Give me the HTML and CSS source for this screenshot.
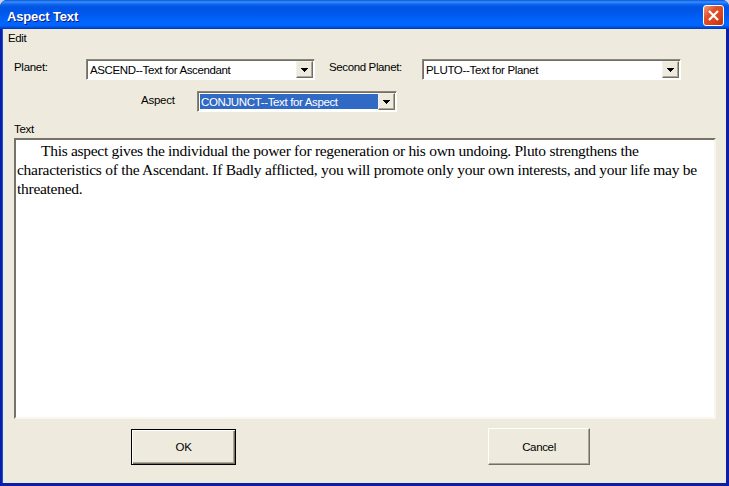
FILE: index.html
```html
<!DOCTYPE html>
<html lang="en">
<head>
<meta charset="utf-8">
<title>Aspect Text</title>
<link rel="stylesheet" href="styles.css">
</head>
<body>
<div class="window">
  <header class="titlebar">
    <h1 class="title">Aspect Text</h1>
    <button class="close" aria-label="Close">
      <svg width="21" height="21" viewBox="0 0 21 21"><path d="M6 6l9 9M15 6l-9 9" stroke="#fff" stroke-width="2.2" fill="none"/></svg>
    </button>
  </header>
  <main class="client">
    <nav class="menu"><span class="t-edit">Edit</span></nav>
    <div class="row row-planets">
      <label class="label label-planet">Planet:</label>
      <div class="combo combo-first"><span class="value"><span class="t-ascend">ASCEND--Text for Ascendant</span></span><span class="drop"><svg width="7" height="4" viewBox="0 0 7 4" shape-rendering="crispEdges"><path d="M0 0h7v1H6v1H5v1H4v1H3V3H2V2H1V1H0z"/></svg></span></div>
      <label class="label label-second">Second Planet:</label>
      <div class="combo combo-second"><span class="value"><span class="t-pluto">PLUTO--Text for Planet</span></span><span class="drop"><svg width="7" height="4" viewBox="0 0 7 4" shape-rendering="crispEdges"><path d="M0 0h7v1H6v1H5v1H4v1H3V3H2V2H1V1H0z"/></svg></span></div>
    </div>
    <div class="row row-aspect">
      <label class="label label-aspect">Aspect</label>
      <div class="combo combo-aspect"><span class="value selected"><span class="t-conjunct">CONJUNCT--Text for Aspect</span></span><span class="drop"><svg width="7" height="4" viewBox="0 0 7 4" shape-rendering="crispEdges"><path d="M0 0h7v1H6v1H5v1H4v1H3V3H2V2H1V1H0z"/></svg></span></div>
    </div>
    <div class="caption">Text</div>
    <div class="memo">
      <div class="line line-1">This aspect gives the individual the power for regeneration or his own undoing. Pluto strengthens the</div>
      <div class="line line-2">characteristics of the Ascendant. If Badly afflicted, you will promote only your own interests, and your life may be</div>
      <div class="line line-3">threatened.</div>
    </div>
    <div class="actions">
      <button class="btn btn-default">OK</button>
      <button class="btn btn-cancel">Cancel</button>
    </div>
  </main>
</div>
</body>
</html>
```
FILE: styles.css
```css
* { box-sizing: border-box; }
body {
  margin: 0;
  background: #c9d6ee;
  font: 11.5px/14px "Liberation Sans", Arial, sans-serif;
  color: #000;
}
.window {
  width: 729px;
  height: 486px;
  overflow: hidden;
  border-radius: 7px 7px 0 0;
  background: #0a1ea8;
}
.titlebar {
  height: 29px;
  display: flex;
  align-items: flex-start;
  justify-content: space-between;
  padding: 5px 5px 0 7px;
  background: linear-gradient(#0a55d8 0, #3a90ff 2px, #1068f0 4px, #0054e3 7px, #0058ee 14px, #0066ff 22px, #0062fa 26px, #0043c8 28px, #0038b0 29px);
}
.title {
  margin: 4px 0 0;
  font: bold 13px/16px "Liberation Sans", Arial, sans-serif;
  letter-spacing: -0.15px;
  color: #fff;
  text-shadow: 1px 1px 0 #0a1883;
  white-space: nowrap;
}
.close {
  width: 21px;
  height: 21px;
  padding: 0;
  border: 1px solid #fff;
  border-radius: 3px;
  background: linear-gradient(135deg, #f0a084 0, #e0512a 35%, #d8431c 70%, #b83210 100%);
}
.close svg { display: block; margin: -1px; }
.client {
  height: 454px;
  margin: 0 3px;
  background: #eeebde;
  box-shadow: -1px 0 #1a50e0;
}
.menu { height: 30px; padding: 2px 0 0 5px; }
.row { display: flex; align-items: flex-start; }
.row-planets { height: 32px; padding-left: 11px; }
.row-aspect { height: 31px; padding-left: 138px; }
.label { white-space: nowrap; flex: none; }
.label-planet { width: 72px; padding-top: 1px; letter-spacing: -0.3px; }
.label-second { width: 93px; padding-top: 1px; letter-spacing: -0.37px; }
.label-aspect { width: 56px; padding-top: 2px; letter-spacing: -0.25px; }
.combo {
  flex: none;
  height: 21px;
  display: flex;
  padding: 1px;
  border: 1px solid;
  border-color: #8a867b #fff #fff #8a867b;
  background: #fff;
  box-shadow: inset 1px 1px #716f64;
}
.combo-first { width: 229px; margin-right: 14px; }
.combo-second { width: 259px; }
.combo-aspect { width: 200px; }
.value {
  flex: 1;
  margin: 1px 0 1px 1px;
  padding: 1px 0 0 1px;
  line-height: 14px;
  white-space: nowrap;
}
.selected { background: #316ac5; color: #fff; }
.drop {
  width: 17px;
  height: 17px;
  display: flex;
  align-items: center;
  justify-content: center;
  background: #eeebde;
  border: 1px solid;
  border-color: #f4f2e8 #716f64 #716f64 #f4f2e8;
  box-shadow: inset -1px -1px #aca899;
}
.t-edit { letter-spacing: -0.4px; }
.t-ascend { letter-spacing: -0.38px; }
.t-pluto { letter-spacing: -0.33px; }
.t-conjunct { letter-spacing: -0.36px; }
.caption { height: 16px; padding-left: 11px; letter-spacing: -0.3px; }
.memo {
  width: 702px;
  height: 281px;
  margin-left: 11px;
  padding: 1px 0 0 1px;
  border: 2px solid;
  border-color: #777269 #f8f6ee #f8f6ee #777269;
  background: #fff;
  font: 15.5px/19px "Liberation Serif", "Times New Roman", serif;
}
.line { white-space: nowrap; }
.line-1 { padding-left: 24px; letter-spacing: -0.29px; }
.line-2 { letter-spacing: -0.27px; }
.line-3 { letter-spacing: -0.28px; }
.actions { display: flex; align-items: flex-start; padding: 9px 0 0 128px; }
.btn {
  padding: 0;
  font: 11.5px/14px "Liberation Sans", Arial, sans-serif;
  letter-spacing: -0.35px;
  color: #000;
  background: #eeebde;
  border-radius: 0;
}
.btn-default {
  width: 105px;
  height: 36px;
  margin: 1px 252px 0 0;
  border: 1px solid #000;
  box-shadow: inset 1px 1px #fff, inset -1px -1px #716f64, inset -2px -2px #aca899;
}
.btn-cancel {
  width: 102px;
  height: 37px;
  border: 1px solid;
  border-color: #fff #716f64 #716f64 #fff;
  box-shadow: inset -1px -1px #aca899;
}
```
